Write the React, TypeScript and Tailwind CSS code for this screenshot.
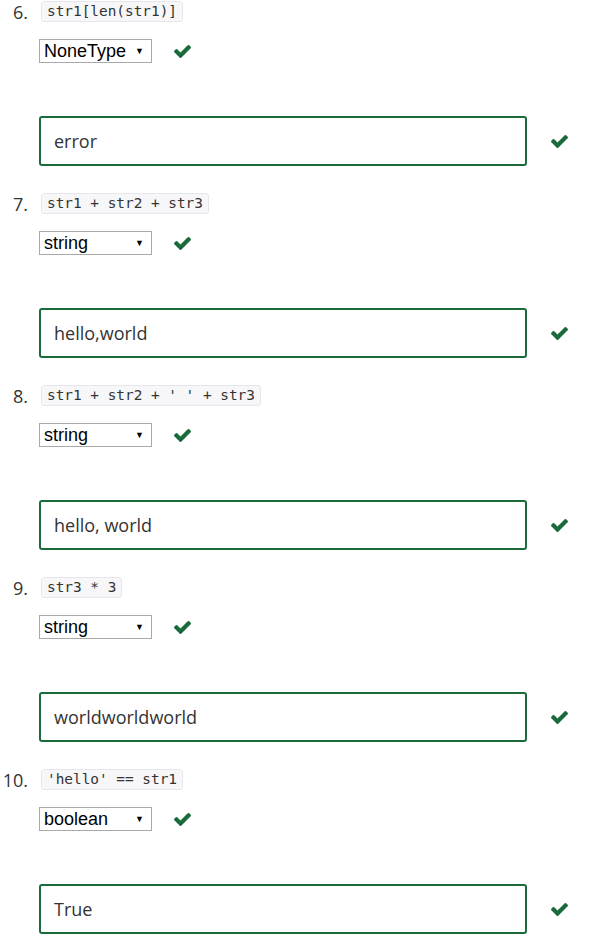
const items = [
  { n: "6.", code: "str1[len(str1)]", type: "NoneType", answer: "error" },
  { n: "7.", code: "str1 + str2 + str3", type: "string", answer: "hello,world" },
  { n: "8.", code: "str1 + str2 + ' ' + str3", type: "string", answer: "hello, world" },
  { n: "9.", code: "str3 * 3", type: "string", answer: "worldworldworld" },
  { n: "10.", code: "'hello' == str1", type: "boolean", answer: "True" },
];

function Check() {
  return (
    <svg width="17" height="13" viewBox="121 334 1550 1188" className="shrink-0">
      <path
        fill="#1b6b3a"
        d="M1671 566q0 40-28 68l-724 724-136 136q-28 28-68 28t-68-28l-136-136-362-362q-28-28-28-68t28-68l136-136q28-28 68-28t68 28l294 295 656-657q28-28 68-28t68 28l136 136q28 28 28 68z"
      />
    </svg>
  );
}

function Question({ n, code, type, answer }: (typeof items)[number]) {
  return (
    <div className="h-[192px]">
      <div className="flex items-center h-[21px]">
        <span className="w-[28px] text-right text-[18px] text-[#333] font-['Open_Sans',sans-serif] leading-none">
          {n}
        </span>
        <code className="ml-[13px] h-[21px] flex items-center px-[5px] bg-[#f7f7f9] border border-[#e6e6ec] rounded-[3px] text-[14.4px] text-[#333] font-['DejaVu_Sans_Mono',monospace] whitespace-pre">
          {code}
        </code>
      </div>
      <div className="flex items-center mt-[17px] ml-[39px]">
        <div className="w-[113px] h-[24px] border border-[#a9a9a9] bg-white flex items-center justify-between pl-[4px] pr-[7px] font-['Liberation_Sans',sans-serif] text-[18px] text-black">
          <span className="leading-none">{type}</span>
          <span className="text-[9px] leading-none">▼</span>
        </div>
        <div className="ml-[22px]">
          <Check />
        </div>
      </div>
      <div className="flex items-center mt-[53px] ml-[39px]">
        <div className="w-[488px] h-[50px] border-2 border-[#1b6b3a] rounded-[3px] flex items-center pl-[13px] font-['Open_Sans',sans-serif] text-[18px] text-[#333]">
          {answer}
        </div>
        <div className="ml-[24px]">
          <Check />
        </div>
      </div>
    </div>
  );
}

export default function App() {
  return (
    <div className="bg-white w-[594px] pt-[1px]">
      {items.map((q) => (
        <Question key={q.n} {...q} />
      ))}
    </div>
  );
}
